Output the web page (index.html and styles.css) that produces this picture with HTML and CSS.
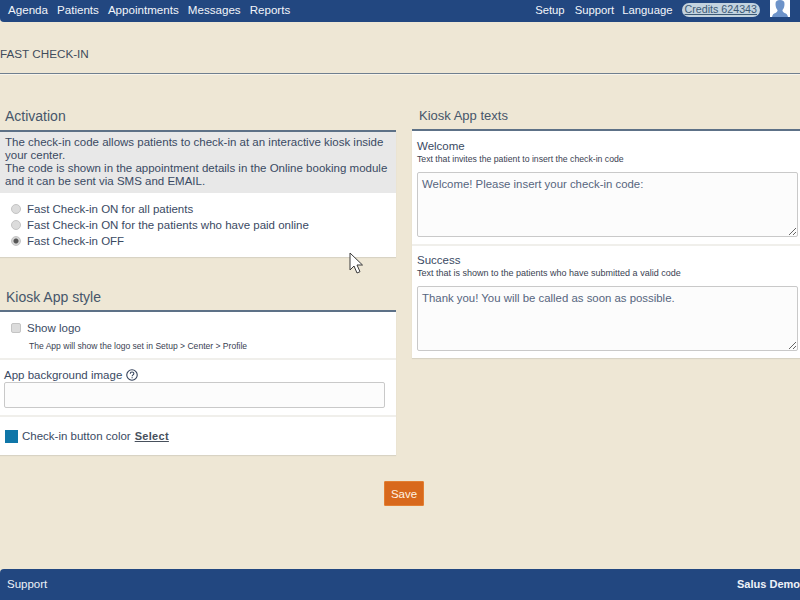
FILE: index.html
```html
<!DOCTYPE html>
<html lang="en">
<head>
<meta charset="utf-8">
<title>Fast Check-in</title>
<link rel="stylesheet" href="styles.css">
</head>
<body>
<div class="page">
  <header class="topbar">
    <nav class="nav-left">
      <a>Agenda</a><a>Patients</a><a>Appointments</a><a>Messages</a><a>Reports</a>
    </nav>
    <nav class="nav-right">
      <a class="setup">Setup</a><a>Support</a><a>Language</a>
      <span class="credits">Credits 624343</span>
      <span class="avatar">
        <svg width="20" height="17" viewBox="0 0 20 17"><rect width="20" height="17" fill="#fff"/><path d="M10 0c-3 0-4.500 1-4.500 4 0 3 1 5 2 6 .3 1-.5 2-2 3-2 .8-3 1.500-3.500 4h16c-.5-2.500-1.500-3.200-3.500-4-1.500-1-2.300-2-2-3 1-1 2-3 2-6 0-3-1.500-4-4.500-4z" fill="#6d93c9"/></svg>
      </span>
    </nav>
  </header>

  <div class="title-row">FAST CHECK-IN</div>

  <main class="columns">
    <div class="col-left">
      <h2 class="sec-head act-head">Activation</h2>
      <section class="card">
        <div class="info">The check-in code allows patients to check-in at an interactive kiosk inside your center.<br>The code is shown in the appointment details in the Online booking module and it can be sent via SMS and EMAIL.</div>
        <div class="radios">
          <label class="opt"><input type="radio" name="fc"><span>Fast Check-in ON for all patients</span></label>
          <label class="opt"><input type="radio" name="fc"><span>Fast Check-in ON for the patients who have paid online</span></label>
          <label class="opt"><input type="radio" name="fc" checked><span>Fast Check-in OFF</span></label>
        </div>
      </section>

      <h2 class="sec-head style-head">Kiosk App style</h2>
      <section class="card">
        <div class="row logo-row">
          <label class="opt"><input type="checkbox"><span>Show logo</span></label>
          <div class="hint logo-hint">The App will show the logo set in Setup &gt; Center &gt; Profile</div>
        </div>
        <div class="row bg-row">
          <div class="bg-label">App background image
            <svg class="help" width="12" height="12" viewBox="0 0 11 11"><circle cx="5.500" cy="5.500" r="4.800" fill="none" stroke="#33415a" stroke-width="1"/><path d="M3.900 4.300c0-2.100 3.300-2.100 3.300-.1 0 1.200-1.600 1.200-1.600 2.500" fill="none" stroke="#33415a" stroke-width="1"/><rect x="5.100" y="7.500" width="1" height="1" fill="#33415a"/></svg>
          </div>
          <input class="text-input" type="text">
        </div>
        <div class="color-row">
          <span class="swatch"></span><span>Check-in button color</span><a class="select">Select</a>
        </div>
      </section>
    </div>

    <div class="col-right">
      <h2 class="sec-head texts-head">Kiosk App texts</h2>
      <section class="card">
        <div class="text-block first">
          <div class="tb-title">Welcome</div>
          <div class="hint welcome-hint">Text that invites the patient to insert the check-in code</div>
          <textarea class="area">Welcome! Please insert your check-in code:</textarea>
        </div>
        <div class="text-block second">
          <div class="tb-title">Success</div>
          <div class="hint">Text that is shown to the patients who have submitted a valid code</div>
          <textarea class="area">Thank you! You will be called as soon as possible.</textarea>
        </div>
      </section>
    </div>
  </main>

  <div class="actions"><button class="save" type="button">Save</button></div>

  <footer class="footer">
    <span>Support</span>
    <span class="brand">Salus Demo</span>
  </footer>

  <svg class="cursor" width="15" height="23" viewBox="0 0 15 23"><path d="M1 1v17l4-4 3 7 3-1.300-3-6.700h5.500z" fill="#fff" stroke="#3a3a3a" stroke-width="1"/></svg>
</div>
</body>
</html>
```
FILE: styles.css
```css
* { box-sizing: border-box; }
html, body { margin: 0; padding: 0; }
body {
  background: #eee7d5;
  font-family: "Liberation Sans", Arial, sans-serif;
  font-size: 11.5px;
  color: #3a4a63;
}
.page {
  position: relative;
  width: 800px;
  height: 600px;
  overflow: hidden;
  display: flex;
  flex-direction: column;
}
.topbar {
  height: 22px;
  background: #224780;
  border-bottom-left-radius: 4px;
  display: flex;
  justify-content: space-between;
  align-items: center;
  padding-bottom: 3px;
  font-size: 11.6px;
  color: #f2f5fa;
  flex: none;
}
.nav-left { display: flex; gap: 9px; padding-left: 8px; }
.nav-right { display: flex; align-items: center; gap: 8px; font-size: 11.3px; }
.setup { margin-right: 2px; }
.credits {
  margin-left: 1px;
  background: #c3d3df;
  color: #3c5a76;
  border-radius: 8px;
  height: 14px;
  line-height: 13px;
  padding: 0 3px;
  font-size: 10.7px;
  text-decoration: underline;
}
.avatar { display: block; width: 20px; height: 17px; margin: -2px 10px 0 2px; }
.avatar svg { display: block; }
.title-row {
  height: 52px;
  flex: none;
  border-bottom: 1px solid #6f7f8f;
  box-shadow: 0 1px 0 #f8f4ea;
  padding-top: 25px;
  font-size: 11.7px;
  line-height: 14px;
  color: #3f4c5c;
}
.columns {
  display: flex;
  justify-content: space-between;
  align-items: flex-start;
  flex: none;
}
.col-left { width: 396px; }
.col-right { width: 388px; }
.sec-head {
  margin: 0;
  font-weight: normal;
  font-size: 14px;
  line-height: 16px;
  color: #46566a;
  border-bottom: 2px solid #5d7187;
}
.act-head { padding: 34px 0 6px 5px; }
.style-head { padding: 32px 0 5px 6px; }
.texts-head { padding: 34px 0 5px 7px; font-size: 13px; }
.card {
  background: #fff;
  box-shadow: 0 1px 1px #d8d3c4;
}
.info {
  background: #e8e8e8;
  padding: 4px 4px 0 5px;
  line-height: 13px;
  color: #3a4a63;
  height: 61px;
}
.radios { padding: 8px 0 0 11px; height: 64px; }
.opt { display: flex; align-items: center; height: 16px; }
.opt input {
  appearance: none;
  margin: 0 6px 0 0;
  width: 10px;
  height: 10px;
  flex: none;
  background: #dcdcdc;
  border: 1px solid #c4c4c4;
}
.opt input[type="radio"] { border-radius: 50%; }
.opt input[type="checkbox"] { border-radius: 2px; }
.opt input:checked { background: radial-gradient(circle, #555 0 2px, #d4d4d4 3px); }
.row { border-bottom: 2px solid #f0efeb; }
.logo-row { height: 48px; padding: 8px 0 0 11px; }
.hint { font-size: 9px; line-height: 11px; color: #3a4252; margin-top: 1px; }
.logo-hint { padding: 4px 0 0 18px; font-size: 8.55px; }
.welcome-hint { font-size: 8.7px; }
.bg-row { height: 57px; padding: 8px 0 0 4px; }
.bg-label { line-height: 14px; display: flex; align-items: center; gap: 4px; }
.help { flex: none; }
.text-input {
  display: block;
  width: 381px;
  height: 26px;
  margin: 0;
  background: #fcfcfc;
  border: 1px solid #c9c9c9;
  border-radius: 2px;
}
.color-row {
  height: 38px;
  display: flex;
  align-items: center;
  padding-left: 5px;
}
.swatch { width: 13px; height: 13px; background: #0f76a8; margin-right: 4px; }
.select { margin-left: 4px; font-size: 11px; font-weight: bold; letter-spacing: .3px; text-decoration: underline; color: #47505c; }
.text-block { padding: 0 4px 0 5px; }
.first { height: 115px; padding-top: 8px; border-bottom: 2px solid #f0efeb; }
.second { height: 112px; padding-top: 7px; }
.tb-title { line-height: 14px; }
.area {
  display: block;
  width: 381px;
  height: 65px;
  margin-top: 7px;
  padding: 5px 4px;
  background: #fcfcfc;
  border: 1px solid #c9c9c9;
  border-radius: 2px;
  font-family: "Liberation Sans", Arial, sans-serif;
  font-size: 11.4px;
  color: #56657e;
  resize: both;
}
.actions {
  display: flex;
  justify-content: center;
  padding: 26px 0 0 8px;
  flex: none;
}
.save {
  width: 40px;
  height: 25px;
  padding: 0;
  background: #d8691c;
  border: 1px solid #e27f32;
  border-radius: 1px;
  color: #fff2e2;
  font-family: "Liberation Sans", Arial, sans-serif;
  font-size: 11.5px;
}
.footer {
  margin-top: auto;
  height: 31px;
  flex: none;
  background: #224780;
  border-top-left-radius: 4px;
  display: flex;
  justify-content: space-between;
  align-items: center;
  padding: 0 0 1px 7px;
  color: #eef2f8;
  white-space: nowrap;
  overflow: hidden;
}
.brand { font-size: 11px; font-weight: bold; }
.cursor { position: absolute; left: 349px; top: 252px; }
```
